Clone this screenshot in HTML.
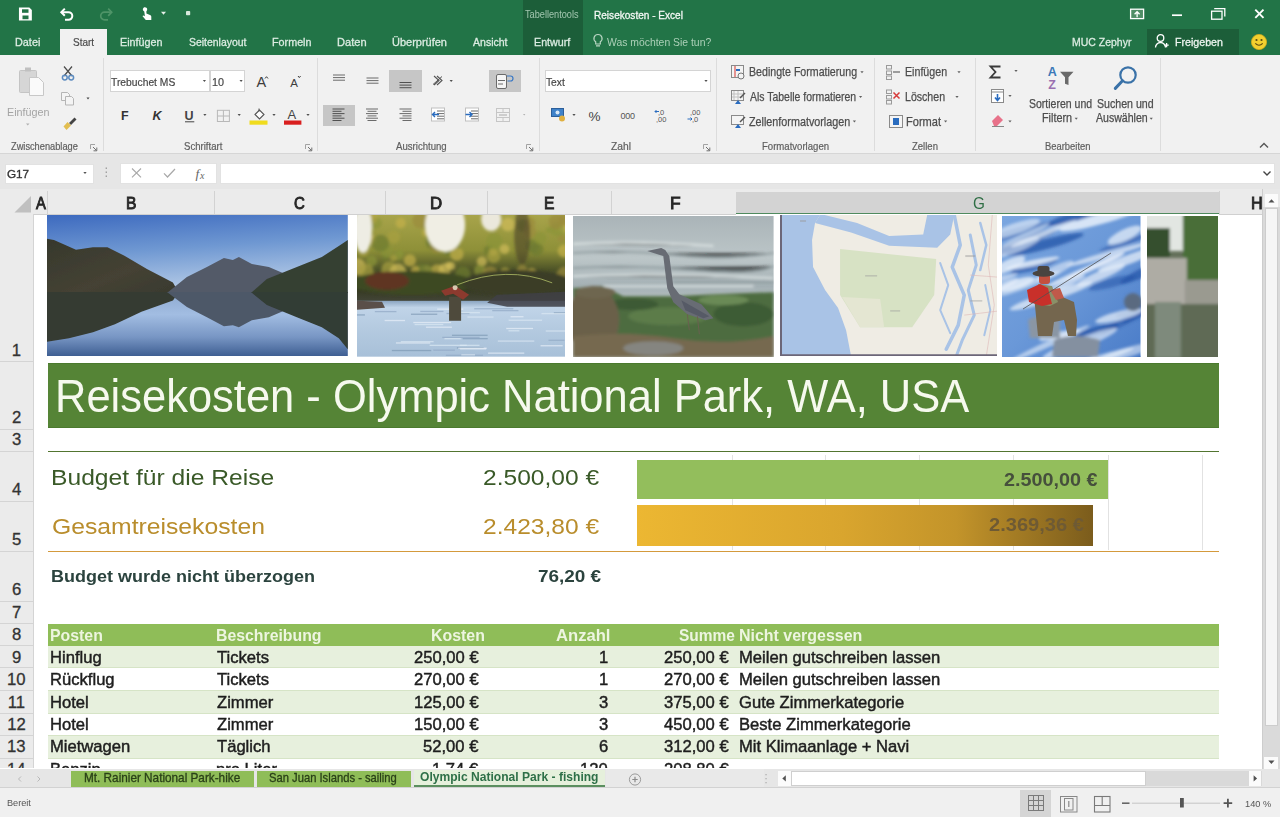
<!DOCTYPE html>
<html><head><meta charset="utf-8"><title>Excel</title>
<style>
*{margin:0;padding:0;box-sizing:border-box}
html,body{width:1280px;height:817px;overflow:hidden;background:#fff;font-family:"Liberation Sans",sans-serif}
.a{position:absolute}
.t{position:absolute;white-space:nowrap;line-height:1;transform-origin:0 0}
svg{position:absolute;overflow:visible}
svg.ph{overflow:hidden}
</style></head><body>
<div class="a" style="left:0;top:0;width:1280px;height:55px;background:#227447"></div>
<div class="a" style="left:523px;top:0;width:60px;height:55px;background:#1c5e39"></div>
<div class="a" style="left:1147px;top:29px;width:92px;height:26px;background:#1c5e39"></div>
<div class="a" style="left:60px;top:29px;width:47px;height:26px;background:#f1f1f1"></div>
<svg style="left:0;top:0" width="200" height="29" viewBox="0 0 200 29">
  <g fill="none" stroke="#fff" stroke-width="1.7">
   <path d="M19.8 8.3h9.2l2 2v9.4h-11.2z" fill="#fff"/>
   <path d="M61.5 12.2h7a3.8 3.8 0 0 1 0 7.6h-3.5" stroke-width="2"/><path d="M64.8 8.6l-3.5 3.6l3.5 3.6" stroke-width="2"/>
  </g>
  <g fill="none" stroke="#4f9468" stroke-width="1.7"><path d="M111.5 12.2h-7a3.8 3.8 0 0 0 0 7.6h3.5"/><path d="M108.2 8.6l3.5 3.6l-3.5 3.6"/></g>
  <g fill="#fff"><path d="M144.3 11.5c-1.6-0.6-2-2.7-0.7-3.8c1.3-1.1 3.4-0.3 3.6 1.4c0.1 0.8-0.2 1.6-0.8 2.1v2.4l3.6 1.3c0.8 0.3 1.3 1 1.3 1.9v3.2h-5.5l-3.4-3.9l1.2-0.7l1.3 0.9z"/></g>
  <path d="M161 11.8h5l-2.5 3z" fill="#e8f0ea"/>
  <rect x="22" y="9.3" width="6.5" height="3.5" fill="#227447"/><rect x="22.5" y="15.5" width="6" height="3.7" fill="#227447"/>
  <rect x="186" y="11" width="4.2" height="4.2" rx="0.8" fill="#d8e8dc"/>
 </svg>
<span class="t" style="left:525.42px;top:10.00px;font-size:10.15px;color:#a3c7b0;transform:scaleX(0.9069);">Tabellentools</span>

<span class="t" style="left:593.99px;top:10.00px;font-size:11.4px;color:#f4f8f5;transform:scaleX(0.8835);-webkit-text-stroke:0.3px #f4f8f5;">Reisekosten - Excel</span>

<svg style="left:0;top:0" width="1280" height="29" viewBox="0 0 1280 29">
  <g fill="none" stroke="#fff" stroke-width="1.3">
   <rect x="1130.6" y="9.2" width="13" height="9.4" fill="#4f8e66"/>
   <path d="M1137.1 17.2v-5M1134.6 14.2l2.5-2.5l2.5 2.5" />
   <path d="M1172 15.2h10" stroke-width="1.7"/>
   <path d="M1214.2 8.6h10.6v7.8"/><rect x="1211.6" y="11.2" width="10.4" height="8"/>
   <path d="M1255.3 9.6l8.2 8.2M1263.5 9.6l-8.2 8.2" stroke-width="1.9"/>
  </g>
 </svg>
<span class="t" style="left:15.38px;top:36.00px;font-size:11.6px;color:#dcece2;transform:scaleX(0.9354);-webkit-text-stroke:0.3px #dcece2;">Datei</span>

<span class="t" style="left:120.14px;top:36.00px;font-size:11.6px;color:#dcece2;transform:scaleX(0.9285);-webkit-text-stroke:0.3px #dcece2;">Einfügen</span>

<span class="t" style="left:188.53px;top:36.00px;font-size:11.6px;color:#dcece2;transform:scaleX(0.9001);-webkit-text-stroke:0.3px #dcece2;">Seitenlayout</span>

<span class="t" style="left:272.14px;top:36.00px;font-size:11.6px;color:#dcece2;transform:scaleX(0.9290);-webkit-text-stroke:0.3px #dcece2;">Formeln</span>

<span class="t" style="left:337.11px;top:36.00px;font-size:11.6px;color:#dcece2;transform:scaleX(0.9562);-webkit-text-stroke:0.3px #dcece2;">Daten</span>

<span class="t" style="left:391.67px;top:36.00px;font-size:11.6px;color:#dcece2;transform:scaleX(0.9474);-webkit-text-stroke:0.3px #dcece2;">Überprüfen</span>

<span class="t" style="left:472.50px;top:36.00px;font-size:11.6px;color:#dcece2;transform:scaleX(0.9080);-webkit-text-stroke:0.3px #dcece2;">Ansicht</span>

<span class="t" style="left:533.64px;top:36.00px;font-size:11.6px;color:#dcece2;transform:scaleX(0.9230);-webkit-text-stroke:0.3px #dcece2;">Entwurf</span>

<span class="t" style="left:1071.66px;top:36.00px;font-size:11.6px;color:#dcece2;transform:scaleX(0.9038);-webkit-text-stroke:0.3px #dcece2;">MUC Zephyr</span>

<span class="t" style="left:72.65px;top:36.00px;font-size:11.6px;color:#4a4a4a;transform:scaleX(0.8627);-webkit-text-stroke:0.2px #4a4a4a;">Start</span>

<span class="t" style="left:1174.65px;top:36.00px;font-size:11.6px;color:#eef5f0;transform:scaleX(0.9189);-webkit-text-stroke:0.3px #eef5f0;">Freigeben</span>

<span class="t" style="left:606.95px;top:36.00px;font-size:11.6px;color:#acd0b8;transform:scaleX(0.8968);">Was möchten Sie tun?</span>

<svg style="left:592px;top:33px" width="12" height="16" viewBox="0 0 12 16"><path d="M6 1.5a4 4 0 0 1 2.3 7.3v2.2h-4.6v-2.2A4 4 0 0 1 6 1.5zM4 12.8h4" fill="none" stroke="#b9d6c3" stroke-width="1.2"/></svg>
<svg style="left:1154px;top:33px" width="16" height="16" viewBox="0 0 16 16"><g fill="none" stroke="#fff" stroke-width="1.3"><circle cx="6.5" cy="5" r="3.3"/><path d="M1.5 14.5a5 5 0 0 1 10 0"/><path d="M10.5 12.2h4.2M12.6 10v4.3"/></g></svg>
<svg style="left:1250px;top:33px" width="18" height="18" viewBox="0 0 18 18"><circle cx="9" cy="9" r="7.6" fill="#f2d02f" stroke="#d6ae1a" stroke-width="0.8"/><circle cx="6.5" cy="7" r="1.1" fill="#5a4a10"/><circle cx="11.5" cy="7" r="1.1" fill="#5a4a10"/><path d="M5.3 10.3q3.7 3.8 7.4 0" fill="none" stroke="#5a4a10" stroke-width="1.1"/></svg>
<div class="a" style="left:0;top:55px;width:1280px;height:98px;background:#f1f1f1"></div>
<div class="a" style="left:103.3px;top:58px;width:1px;height:93px;background:#dcdcdc"></div>
<div class="a" style="left:317.0px;top:58px;width:1px;height:93px;background:#dcdcdc"></div>
<div class="a" style="left:538.5px;top:58px;width:1px;height:93px;background:#dcdcdc"></div>
<div class="a" style="left:715.5px;top:58px;width:1px;height:93px;background:#dcdcdc"></div>
<div class="a" style="left:873.9px;top:58px;width:1px;height:93px;background:#dcdcdc"></div>
<div class="a" style="left:974.5px;top:58px;width:1px;height:93px;background:#dcdcdc"></div>
<div class="a" style="left:1159.5px;top:58px;width:1px;height:93px;background:#dcdcdc"></div>
<span class="t" style="left:10.72px;top:141.00px;font-size:10.8px;color:#5e5e5e;transform:scaleX(0.8563);-webkit-text-stroke:0.2px #5e5e5e;">Zwischenablage</span>

<span class="t" style="left:184.17px;top:141.00px;font-size:10.8px;color:#5e5e5e;transform:scaleX(0.8877);-webkit-text-stroke:0.2px #5e5e5e;">Schriftart</span>

<span class="t" style="left:396.00px;top:141.00px;font-size:10.8px;color:#5e5e5e;transform:scaleX(0.8894);-webkit-text-stroke:0.2px #5e5e5e;">Ausrichtung</span>

<span class="t" style="left:610.69px;top:141.00px;font-size:10.8px;color:#5e5e5e;transform:scaleX(0.9527);-webkit-text-stroke:0.2px #5e5e5e;">Zahl</span>

<span class="t" style="left:761.74px;top:141.00px;font-size:10.8px;color:#5e5e5e;transform:scaleX(0.8864);-webkit-text-stroke:0.2px #5e5e5e;">Formatvorlagen</span>

<span class="t" style="left:912.21px;top:141.00px;font-size:10.8px;color:#5e5e5e;transform:scaleX(0.8818);-webkit-text-stroke:0.2px #5e5e5e;">Zellen</span>

<span class="t" style="left:1045.25px;top:141.00px;font-size:10.8px;color:#5e5e5e;transform:scaleX(0.8703);-webkit-text-stroke:0.2px #5e5e5e;">Bearbeiten</span>

<svg style="left:89.5px;top:144px" width="8" height="8" viewBox="0 0 8 8"><path d="M0.5 5V0.5h4.5" fill="none" stroke="#9a9a9a" stroke-width="0.9"/><path d="M3 3l3.5 3.5M6.8 3.5v3.3h-3.3" fill="none" stroke="#707070" stroke-width="1"/></svg>
<svg style="left:305px;top:144px" width="8" height="8" viewBox="0 0 8 8"><path d="M0.5 5V0.5h4.5" fill="none" stroke="#9a9a9a" stroke-width="0.9"/><path d="M3 3l3.5 3.5M6.8 3.5v3.3h-3.3" fill="none" stroke="#707070" stroke-width="1"/></svg>
<svg style="left:526px;top:144px" width="8" height="8" viewBox="0 0 8 8"><path d="M0.5 5V0.5h4.5" fill="none" stroke="#9a9a9a" stroke-width="0.9"/><path d="M3 3l3.5 3.5M6.8 3.5v3.3h-3.3" fill="none" stroke="#707070" stroke-width="1"/></svg>
<svg style="left:703px;top:144px" width="8" height="8" viewBox="0 0 8 8"><path d="M0.5 5V0.5h4.5" fill="none" stroke="#9a9a9a" stroke-width="0.9"/><path d="M3 3l3.5 3.5M6.8 3.5v3.3h-3.3" fill="none" stroke="#707070" stroke-width="1"/></svg>
<svg style="left:1259px;top:142px" width="10" height="7" viewBox="0 0 10 7"><path d="M1 5.5l4-4l4 4" fill="none" stroke="#555" stroke-width="1.4"/></svg>
<svg style="left:0;top:55px" width="104" height="98" viewBox="0 55 104 98">
 <g fill="#d6d6d6" stroke="#c4c4c4" stroke-width="1"><rect x="19.5" y="70.5" width="17" height="22" rx="1"/></g>
 <rect x="25" y="67.5" width="6" height="4" fill="#c0c0c0"/>
 <path d="M29.5 77.5h9l5 5v13h-14z" fill="#fafafa" stroke="#c8c8c8"/>
 <path d="M26 123.5h3.5l-1.75 2z" fill="#b0b0b0"/>
 <g fill="none" stroke="#4a4a4a" stroke-width="1.2"><path d="M64 66.5l8 9.5M72 66.5l-8 9.5"/></g>
 <g fill="none" stroke="#5d8cc0" stroke-width="1.5"><circle cx="64.8" cy="77.6" r="2.4"/><circle cx="71.2" cy="77.6" r="2.4"/></g>
 <g fill="#f4f4f4" stroke="#b5b5b5"><path d="M61.5 92.5h6l2 2v6h-8z"/><path d="M65.5 96.5h6l2 2v6.5h-8z"/></g>
 <path d="M86.5 97.5h3l-1.5 2z" fill="#444"/>
 <path d="M69 123l5.5-5.5l2 2l-5.5 5.5z" fill="#444"/>
 <path d="M63.5 126.5l4-4.5l3.5 3.5l-4.5 4.5z" fill="#e2be50"/>
</svg>
<span class="t" style="left:7.14px;top:106.00px;font-size:11.6px;color:#a4a4a4;transform:scaleX(0.9285);">Einfügen</span>

<div class="a" style="left:109.5px;top:70.3px;width:100px;height:21.5px;background:#fff;border:1px solid #d4d4d4"></div>
<div class="a" style="left:209.5px;top:70.3px;width:35.7px;height:21.5px;background:#fff;border:1px solid #d4d4d4"></div>
<span class="t" style="left:110.99px;top:77.00px;font-size:11.3px;color:#474747;transform:scaleX(0.9115);-webkit-text-stroke:0.2px #474747;">Trebuchet MS</span>

<span class="t" style="left:211.79px;top:77.00px;font-size:11.3px;color:#474747;transform:scaleX(0.9558);-webkit-text-stroke:0.2px #474747;">10</span>

<svg style="left:100px;top:60px" width="220" height="95" viewBox="100 60 220 95">
 <g fill="#505050"><path d="M202.8 80h3.2l-1.6 2z"/><path d="M239.5 80h3.2l-1.6 2z"/><path d="M203.3 114h3.2l-1.6 2z"/><path d="M237.6 114h3.2l-1.6 2z"/><path d="M272.4 114h3.2l-1.6 2z"/><path d="M306.4 114h3.2l-1.6 2z"/></g>
 <text x="256.5" y="87.2" font-family="Liberation Sans" font-size="14.5" fill="#3d3d3d">A</text><path d="M265 78.5l1.5-1.8l1.5 1.8" fill="none" stroke="#3d3d3d" stroke-width="1"/>
 <text x="290.3" y="87.2" font-family="Liberation Sans" font-size="11.5" fill="#3d3d3d">A</text><path d="M298 76l1.3 1.6l1.3-1.6" fill="none" stroke="#3d3d3d" stroke-width="1"/>
 <text x="121" y="119.8" font-family="Liberation Sans" font-weight="bold" font-size="12.5" fill="#333">F</text>
 <text x="152.5" y="119.8" font-family="Liberation Sans" font-weight="bold" font-style="italic" font-size="12.5" fill="#333">K</text>
 <text x="184.6" y="119.8" font-family="Liberation Sans" font-weight="bold" font-size="12.5" fill="#444">U</text><path d="M185 121.8h9.3" stroke="#444" stroke-width="1"/>
 <g fill="none" stroke="#b8b8b8" stroke-width="1"><rect x="217.4" y="110.3" width="12" height="11.2"/><path d="M223.4 110.3v11.2M217.4 116h12"/></g>
 <path d="M255 114.5l4.5-4.5l4.5 4.5l-4.5 4.5z" fill="#fff" stroke="#555" stroke-width="1.1"/><path d="M259 108.5v3" stroke="#555" stroke-width="1"/>
 <rect x="249.5" y="120.5" width="18" height="4.2" fill="#f0dc1e"/>
 <text x="287.6" y="119" font-family="Liberation Sans" font-size="13" fill="#444">A</text>
 <rect x="284" y="120.5" width="17.4" height="4.2" fill="#d91f1f"/>
</svg>
<div class="a" style="left:389px;top:70px;width:33px;height:22px;background:#c6c6c6"></div>
<div class="a" style="left:489px;top:70px;width:32px;height:22px;background:#c6c6c6"></div>
<div class="a" style="left:322.5px;top:104.5px;width:32.5px;height:21.5px;background:#c6c6c6"></div>
<svg style="left:320px;top:60px" width="400" height="90" viewBox="320 60 400 90"><rect x="333" y="74.5" width="12" height="1" fill="#6b6b6b"/><rect x="333" y="77.1" width="12" height="1" fill="#6b6b6b"/><rect x="333" y="79.7" width="12" height="1" fill="#6b6b6b"/><rect x="366.5" y="77.5" width="12" height="1" fill="#6b6b6b"/><rect x="366.5" y="80.1" width="12" height="1" fill="#6b6b6b"/><rect x="366.5" y="82.7" width="12" height="1" fill="#6b6b6b"/><rect x="399.5" y="82.0" width="12" height="1" fill="#505050"/><rect x="399.5" y="84.6" width="12" height="1" fill="#505050"/><rect x="399.5" y="87.2" width="12" height="1" fill="#505050"/><path d="M434 76l5 4.5l-5 4.5M437 76l5 4.5l-5 4.5" fill="none" stroke="#555" stroke-width="1.1"/><path d="M433 84.5l9-8" stroke="#555"/><path d="M449.6 80h3.2l-1.6 2z" fill="#505050"/><rect x="496.5" y="74.5" width="10" height="14" rx="1.5" fill="#f5f5f5" stroke="#6a6a6a"/><path d="M498 80.5h7M498 84h5" stroke="#6a6a6a"/><path d="M507 76h3.5a2.5 2.5 0 0 1 0 5h-3" fill="none" stroke="#3a78c4" stroke-width="1.2"/><rect x="332.5" y="108.5" width="12" height="1" fill="#505050"/><rect x="332.5" y="110.8" width="9" height="1" fill="#505050"/><rect x="332.5" y="113.1" width="12" height="1" fill="#505050"/><rect x="332.5" y="115.4" width="9" height="1" fill="#505050"/><rect x="332.5" y="117.7" width="12" height="1" fill="#505050"/><rect x="332.5" y="120.0" width="9" height="1" fill="#505050"/><rect x="366" y="108.5" width="12" height="1" fill="#6b6b6b"/><rect x="367.5" y="110.8" width="9" height="1" fill="#6b6b6b"/><rect x="366" y="113.1" width="12" height="1" fill="#6b6b6b"/><rect x="367.5" y="115.4" width="9" height="1" fill="#6b6b6b"/><rect x="366" y="117.7" width="12" height="1" fill="#6b6b6b"/><rect x="367.5" y="120.0" width="9" height="1" fill="#6b6b6b"/><rect x="399.5" y="108.5" width="12" height="1" fill="#6b6b6b"/><rect x="402.5" y="110.8" width="9" height="1" fill="#6b6b6b"/><rect x="399.5" y="113.1" width="12" height="1" fill="#6b6b6b"/><rect x="402.5" y="115.4" width="9" height="1" fill="#6b6b6b"/><rect x="399.5" y="117.7" width="12" height="1" fill="#6b6b6b"/><rect x="402.5" y="120.0" width="9" height="1" fill="#6b6b6b"/><rect x="431.5" y="108" width="13" height="13" fill="#fff" stroke="#c0c0c0"/><rect x="437" y="110.5" width="7" height="1" fill="#6b6b6b"/><rect x="437" y="113.1" width="7" height="1" fill="#6b6b6b"/><rect x="437" y="115.7" width="7" height="1" fill="#6b6b6b"/><rect x="437" y="118.3" width="7" height="1" fill="#6b6b6b"/><path d="M439 114.5h-6.5M435 112l-2.5 2.5l2.5 2.5" fill="none" stroke="#2a6cbf" stroke-width="1.4"/><rect x="465.5" y="108" width="13" height="13" fill="#fff" stroke="#c0c0c0"/><rect x="471" y="110.5" width="7" height="1" fill="#6b6b6b"/><rect x="471" y="113.1" width="7" height="1" fill="#6b6b6b"/><rect x="471" y="115.7" width="7" height="1" fill="#6b6b6b"/><rect x="471" y="118.3" width="7" height="1" fill="#6b6b6b"/><path d="M465.5 114.5h6.5M469.5 112l2.5 2.5l-2.5 2.5" fill="none" stroke="#2a6cbf" stroke-width="1.4"/><g fill="none" stroke="#c6c6c6"><rect x="496.5" y="108.5" width="13" height="13"/><path d="M496.5 112.5h13M496.5 117.5h13M503 108.5v4M503 117.5v4"/></g><path d="M499 115h8" stroke="#aaa"/><path d="M523 114h2.4l-1.2 1.5z" fill="#b0b0b0"/></svg>
<div class="a" style="left:544.5px;top:70.3px;width:166.5px;height:21.5px;background:#fff;border:1px solid #d4d4d4"></div>
<span class="t" style="left:545.80px;top:77.00px;font-size:11.3px;color:#474747;transform:scaleX(0.9070);-webkit-text-stroke:0.2px #474747;">Text</span>

<svg style="left:540px;top:60px" width="180" height="90" viewBox="540 60 180 90">
 <path d="M704.4 80h3.2l-1.6 2z" fill="#505050"/>
 <rect x="551.5" y="108.5" width="12" height="8" fill="#3f82c9" stroke="#2c5f9a"/><circle cx="557.5" cy="112.5" r="2" fill="#d9e8f6"/><circle cx="562" cy="118.5" r="3" fill="#e0b040"/>
 <path d="M572.4 114h3.2l-1.6 2z" fill="#505050"/>
 <text x="588.5" y="120.5" font-family="Liberation Sans" font-size="13.5" fill="#444">%</text>
 <text x="620.5" y="119" font-family="Liberation Sans" font-size="9" fill="#555" letter-spacing="-0.3">000</text>
 <text x="658" y="114.5" font-family="Liberation Sans" font-size="7.5" fill="#555">,0</text><text x="656" y="121.5" font-family="Liberation Sans" font-size="7.5" fill="#555">,00</text><path d="M655 111.5h4M656.5 110l-1.5 1.5l1.5 1.5" stroke="#2a6cbf" fill="none"/>
 <text x="690" y="114.5" font-family="Liberation Sans" font-size="7.5" fill="#555">,00</text><text x="692" y="121.5" font-family="Liberation Sans" font-size="7.5" fill="#555">,0</text><path d="M687.5 119h4.5M690.5 117.5l1.5 1.5l-1.5 1.5" stroke="#2a6cbf" fill="none"/>
</svg>
<span class="t" style="left:748.90px;top:67.00px;font-size:11.95px;color:#4d4d4d;transform:scaleX(0.8897);-webkit-text-stroke:0.25px #4d4d4d;">Bedingte Formatierung</span>

<span class="t" style="left:749.75px;top:92.00px;font-size:11.95px;color:#4d4d4d;transform:scaleX(0.8757);-webkit-text-stroke:0.25px #4d4d4d;">Als Tabelle formatieren</span>

<span class="t" style="left:749.43px;top:117.00px;font-size:11.95px;color:#4d4d4d;transform:scaleX(0.9028);-webkit-text-stroke:0.25px #4d4d4d;">Zellenformatvorlagen</span>

<svg style="left:720px;top:60px" width="260" height="90" viewBox="720 60 260 90">
 <g fill="#606060"><path d="M860.4 71.2h3.2l-1.6 2z"/><path d="M859 96h3.2l-1.6 2z"/><path d="M852.8 120.6h3.2l-1.6 2z"/></g>
 <rect x="731.5" y="65.5" width="12" height="12" fill="#f4f4f4" stroke="#8a8a8a"/><path d="M735 66v11" stroke="#d9534f" stroke-width="1.2"/><path d="M736 70h4" stroke="#2a6cbf" stroke-width="2"/><circle cx="741" cy="76" r="3" fill="#f4f4f4" stroke="#777"/>
 <rect x="731.5" y="90.5" width="12" height="10" fill="#f4f4f4" stroke="#8a8a8a"/><path d="M734 91v9M738 91v9M732 94h11M732 97h11" stroke="#c0c0c0"/><path d="M735 104l3-4l3 4z" fill="#2a6cbf"/><path d="M740 98l5-5" stroke="#555" stroke-width="1.5"/>
 <rect x="731.5" y="115.5" width="12" height="9" fill="#f4f4f4" stroke="#8a8a8a"/><path d="M735 128l3-4l3 4z" fill="#2a6cbf"/><path d="M740 122l5-5" stroke="#555" stroke-width="1.5"/>
</svg>
<span class="t" style="left:904.65px;top:67.00px;font-size:11.95px;color:#4d4d4d;transform:scaleX(0.8926);-webkit-text-stroke:0.25px #4d4d4d;">Einfügen</span>

<span class="t" style="left:904.65px;top:92.00px;font-size:11.95px;color:#4d4d4d;transform:scaleX(0.8871);-webkit-text-stroke:0.25px #4d4d4d;">Löschen</span>

<span class="t" style="left:906.12px;top:117.00px;font-size:11.95px;color:#4d4d4d;transform:scaleX(0.9245);-webkit-text-stroke:0.25px #4d4d4d;">Format</span>

<svg style="left:880px;top:60px" width="100" height="90" viewBox="880 60 100 90">
 <g fill="#606060"><path d="M957.4 71.2h3.2l-1.6 2z"/><path d="M955.4 96h3.2l-1.6 2z"/><path d="M944 120.6h3.2l-1.6 2z"/></g>
 <g fill="none" stroke="#9a9a9a"><rect x="886.5" y="65.5" width="5" height="3.5"/><rect x="886.5" y="71" width="5" height="3.5"/><rect x="886.5" y="76" width="5" height="3.5"/></g><path d="M893 72h7" stroke="#666" stroke-width="1.2"/>
 <g fill="none" stroke="#9a9a9a"><rect x="886.5" y="90" width="5" height="3.5"/><rect x="886.5" y="95.5" width="5" height="3.5"/><rect x="886.5" y="100.5" width="5" height="3.5"/></g><path d="M893.5 92.5l6 6M899.5 92.5l-6 6" stroke="#d63a3a" stroke-width="1.5"/>
 <rect x="889.5" y="115.5" width="13" height="12" fill="#f4f4f4" stroke="#8a8a8a"/><rect x="893" y="118" width="6" height="7" fill="#2a6cbf"/>
</svg>
<span class="t" style="left:1028.53px;top:99.00px;font-size:11.95px;color:#4d4d4d;transform:scaleX(0.8809);-webkit-text-stroke:0.25px #4d4d4d;">Sortieren und</span>

<span class="t" style="left:1041.63px;top:113.00px;font-size:11.95px;color:#4d4d4d;transform:scaleX(0.9076);-webkit-text-stroke:0.25px #4d4d4d;">Filtern</span>

<span class="t" style="left:1096.52px;top:99.00px;font-size:11.95px;color:#4d4d4d;transform:scaleX(0.8896);-webkit-text-stroke:0.25px #4d4d4d;">Suchen und</span>

<span class="t" style="left:1096.00px;top:113.00px;font-size:11.95px;color:#4d4d4d;transform:scaleX(0.8853);-webkit-text-stroke:0.25px #4d4d4d;">Auswählen</span>

<svg style="left:976px;top:60px" width="184" height="90" viewBox="976 60 184 90">
 <g fill="#606060"><path d="M1014.4 70h3.2l-1.6 2z"/><path d="M1008.4 95h3.2l-1.6 2z"/><path d="M1008.4 120.5h3.2l-1.6 2z"/><path d="M1074.6 117.8h3.2l-1.6 2z"/><path d="M1149.6 117.8h3.2l-1.6 2z"/></g>
 <path d="M1000.5 66.5h-10l5 5.5l-5 5.5h10" fill="none" stroke="#3a3a3a" stroke-width="1.8"/>
 <rect x="991.5" y="89.5" width="12" height="13" fill="#fff" stroke="#8a8a8a"/><path d="M991.5 92h12" stroke="#8a8a8a"/><path d="M997.5 94v6M995 97.5l2.5 3l2.5-3" fill="none" stroke="#2a6cbf" stroke-width="1.6"/>
 <path d="M992 121l6-6l5 5l-6 6h-3z" fill="#e8728a"/><path d="M992 126.5h12" stroke="#888"/>
 <text x="1047.8" y="75.8" font-family="Liberation Sans" font-weight="bold" font-size="12.5" fill="#3a78b8">A</text>
 <text x="1048.3" y="88.5" font-family="Liberation Sans" font-weight="bold" font-size="12.5" fill="#9a70b0">Z</text>
 <path d="M1060 71.8h13.5l-5 5.5v7.6l-3.5-1.2v-6.4z" fill="#6a6a6a"/>
 <circle cx="1128" cy="75" r="7.7" fill="none" stroke="#3a72a8" stroke-width="2.2"/><path d="M1122.5 80.8l-7.2 7.6" stroke="#3a72a8" stroke-width="3" stroke-linecap="round"/>
</svg>
<div class="a" style="left:0;top:152.5px;width:1280px;height:37px;background:#e6e6e6"></div>
<div class="a" style="left:0;top:152.5px;width:1280px;height:1px;background:#d6d6d6"></div>
<div class="a" style="left:4.5px;top:163.5px;width:89px;height:20.5px;background:#fff;border:1px solid #e2e2e2"></div>
<div class="a" style="left:120.3px;top:163.2px;width:96.6px;height:20.6px;background:#fff;border:1px solid #e2e2e2"></div>
<div class="a" style="left:220px;top:163.2px;width:1055px;height:20.6px;background:#fff;border:1px solid #e2e2e2"></div>
<span class="t" style="left:7.41px;top:168.00px;font-size:11.6px;color:#333;transform:scaleX(1.0096);-webkit-text-stroke:0.35px #333;">G17</span>

<svg style="left:0;top:150px" width="1280" height="40" viewBox="0 150 1280 40">
 <path d="M83.3 172h3.4l-1.7 2z" fill="#555"/>
 <g fill="#9a9a9a"><rect x="105.6" y="167.5" width="1.4" height="1.4"/><rect x="105.6" y="171.5" width="1.4" height="1.4"/><rect x="105.6" y="175.5" width="1.4" height="1.4"/></g>
 <path d="M132 168.5l9 8.8M141 168.5l-9 8.8" stroke="#a8a8a8" stroke-width="1.1"/>
 <path d="M164 173.3l3.5 3.7l7.5-8" fill="none" stroke="#a8a8a8" stroke-width="1.2"/>
 <text x="195.5" y="178" font-family="Liberation Serif" font-style="italic" font-size="13.5" fill="#666">f</text><text x="200" y="179" font-family="Liberation Serif" font-style="italic" font-size="10" fill="#666">x</text>
 <path d="M1263.5 171.5l3.5 3.5l3.5-3.5" fill="none" stroke="#444" stroke-width="1.4"/>
</svg>
<div class="a" style="left:0;top:0;width:1262px;height:768px;overflow:hidden">
<div class="a" style="left:0;top:189.4px;width:1262px;height:24.6px;background:#ebebeb"></div>
<div class="a" style="left:736px;top:192px;width:483px;height:22px;background:#d3d3d3"></div>
<div class="a" style="left:736px;top:212.6px;width:483px;height:1.5px;background:#4f8a5e"></div>
<div class="a" style="left:0;top:213.5px;width:736px;height:1px;background:#d0d0d0"></div>
<div class="a" style="left:1219px;top:213.5px;width:43px;height:1px;background:#d0d0d0"></div>
<div class="a" style="left:47.0px;top:191px;width:1px;height:23px;background:#d2d2d2"></div>
<div class="a" style="left:213.9px;top:191px;width:1px;height:23px;background:#d2d2d2"></div>
<div class="a" style="left:384.5px;top:191px;width:1px;height:23px;background:#d2d2d2"></div>
<div class="a" style="left:486.5px;top:191px;width:1px;height:23px;background:#d2d2d2"></div>
<div class="a" style="left:610.5px;top:191px;width:1px;height:23px;background:#d2d2d2"></div>
<div class="a" style="left:1218.5px;top:191px;width:1px;height:23px;background:#d2d2d2"></div>
<svg style="left:0;top:189px" width="34" height="25" viewBox="0 189 34 25"><path d="M14.5 212.5L31 196v16.5z" fill="#c0c0c0"/></svg>
<div class="a" style="left:0;top:214px;width:33.4px;height:554px;background:#ebebeb"></div>
<div class="a" style="left:33px;top:214px;width:1px;height:554px;background:#d4d4d4"></div>
<span class="t" style="left:35.80px;top:195.00px;font-size:16.5px;color:#262626;transform:scaleX(0.8942);-webkit-text-stroke:0.9px #262626;">A</span>

<span class="t" style="left:126.00px;top:195.00px;font-size:16.5px;color:#262626;transform:scaleX(0.9471);-webkit-text-stroke:0.9px #262626;">B</span>

<span class="t" style="left:293.75px;top:195.00px;font-size:16.5px;color:#262626;transform:scaleX(0.9078);-webkit-text-stroke:0.9px #262626;">C</span>

<span class="t" style="left:429.66px;top:195.00px;font-size:16.5px;color:#262626;transform:scaleX(1.0198);-webkit-text-stroke:0.9px #262626;">D</span>

<span class="t" style="left:544.25px;top:195.00px;font-size:16.5px;color:#262626;transform:scaleX(0.9464);-webkit-text-stroke:0.9px #262626;">E</span>

<span class="t" style="left:669.61px;top:195.00px;font-size:16.5px;color:#262626;transform:scaleX(1.0526);-webkit-text-stroke:0.9px #262626;">F</span>

<span class="t" style="left:1250.71px;top:195.00px;font-size:16.5px;color:#262626;transform:scaleX(0.9752);-webkit-text-stroke:0.9px #262626;">H</span>

<span class="t" style="left:973.24px;top:195.00px;font-size:16.5px;color:#2f6e45;transform:scaleX(0.9264);">G</span>

<div class="a" style="left:0;top:361.3px;width:33px;height:1px;background:#d4d4d4"></div>
<div class="a" style="left:0;top:428.5px;width:33px;height:1px;background:#d4d4d4"></div>
<div class="a" style="left:0;top:451.3px;width:33px;height:1px;background:#d4d4d4"></div>
<div class="a" style="left:0;top:500.5px;width:33px;height:1px;background:#d4d4d4"></div>
<div class="a" style="left:0;top:550.5px;width:33px;height:1px;background:#d4d4d4"></div>
<div class="a" style="left:0;top:600.5px;width:33px;height:1px;background:#d4d4d4"></div>
<div class="a" style="left:0;top:623.3px;width:33px;height:1px;background:#d4d4d4"></div>
<div class="a" style="left:0;top:645.1px;width:33px;height:1px;background:#d4d4d4"></div>
<div class="a" style="left:0;top:667.3px;width:33px;height:1px;background:#d4d4d4"></div>
<div class="a" style="left:0;top:690.0px;width:33px;height:1px;background:#d4d4d4"></div>
<div class="a" style="left:0;top:712.5px;width:33px;height:1px;background:#d4d4d4"></div>
<div class="a" style="left:0;top:735.3px;width:33px;height:1px;background:#d4d4d4"></div>
<div class="a" style="left:0;top:757.8px;width:33px;height:1px;background:#d4d4d4"></div>
<span class="t" style="left:11.72px;top:343.00px;font-size:16.7px;color:#333;-webkit-text-stroke:0.3px #333;">1</span>

<span class="t" style="left:11.97px;top:410.00px;font-size:16.7px;color:#333;-webkit-text-stroke:0.3px #333;">2</span>

<span class="t" style="left:11.97px;top:432.00px;font-size:16.7px;color:#333;-webkit-text-stroke:0.3px #333;">3</span>

<span class="t" style="left:12.05px;top:482.00px;font-size:16.7px;color:#333;-webkit-text-stroke:0.3px #333;">4</span>

<span class="t" style="left:11.97px;top:532.00px;font-size:16.7px;color:#333;-webkit-text-stroke:0.3px #333;">5</span>

<span class="t" style="left:11.89px;top:582.00px;font-size:16.7px;color:#333;-webkit-text-stroke:0.3px #333;">6</span>

<span class="t" style="left:11.97px;top:605.00px;font-size:16.7px;color:#333;-webkit-text-stroke:0.3px #333;">7</span>

<span class="t" style="left:11.93px;top:627.00px;font-size:16.7px;color:#333;-webkit-text-stroke:0.3px #333;">8</span>

<span class="t" style="left:11.97px;top:650.00px;font-size:16.7px;color:#333;-webkit-text-stroke:0.3px #333;">9</span>

<span class="t" style="left:7.00px;top:672.00px;font-size:16.7px;color:#333;-webkit-text-stroke:0.3px #333;">10</span>

<span class="t" style="left:7.71px;top:695.00px;font-size:16.7px;color:#333;-webkit-text-stroke:0.3px #333;">11</span>

<span class="t" style="left:7.13px;top:717.00px;font-size:16.7px;color:#333;-webkit-text-stroke:0.3px #333;">12</span>

<span class="t" style="left:7.04px;top:739.00px;font-size:16.7px;color:#333;-webkit-text-stroke:0.3px #333;">13</span>

<span class="t" style="left:6.96px;top:762.00px;font-size:16.7px;color:#333;-webkit-text-stroke:0.3px #333;">14</span>

<div class="a" style="left:47.7px;top:362.8px;width:1171.3px;height:65.4px;background:#558436;border-top:1px solid #4b7a2e;border-bottom:1px solid #4b7a2e"></div>
<span class="t" style="left:54.62px;top:374.00px;font-size:45.45px;color:#f6f9ee;transform:scaleX(0.9570);">Reisekosten - Olympic National Park, WA, USA</span>

<div class="a" style="left:47.6px;top:451px;width:1171.4px;height:1.4px;background:#527530"></div>
<div class="a" style="left:47.6px;top:550.5px;width:1171.4px;height:1.5px;background:#d49a3c"></div>
<div class="a" style="left:731.5px;top:455px;width:1px;height:95px;background:#e2e2e2"></div>
<div class="a" style="left:825.0px;top:455px;width:1px;height:95px;background:#e2e2e2"></div>
<div class="a" style="left:919.0px;top:455px;width:1px;height:95px;background:#e2e2e2"></div>
<div class="a" style="left:1013.0px;top:455px;width:1px;height:95px;background:#e2e2e2"></div>
<div class="a" style="left:1107.5px;top:455px;width:1px;height:95px;background:#e2e2e2"></div>
<div class="a" style="left:1201.5px;top:455px;width:1px;height:95px;background:#e2e2e2"></div>
<div class="a" style="left:637.4px;top:460px;width:470.6px;height:39.4px;background:#93be5c"></div>
<div class="a" style="left:637.4px;top:505.4px;width:455.6px;height:40.3px;background:linear-gradient(90deg,#ecb732 0%,#d9a52e 45%,#c3942a 70%,#7b5c1c 100%)"></div>
<span class="t" style="left:50.93px;top:467.00px;font-size:22.5px;color:#3a5a28;transform:scaleX(1.0948);">Budget für die Reise</span>

<span class="t" style="left:51.66px;top:516.00px;font-size:22.5px;color:#b98d2c;transform:scaleX(1.0986);">Gesamtreisekosten</span>

<span class="t" style="left:483.27px;top:467.00px;font-size:22.5px;color:#3a5a28;transform:scaleX(1.0920);">2.500,00 €</span>

<span class="t" style="left:483.27px;top:516.00px;font-size:22.5px;color:#b98d2c;transform:scaleX(1.0920);">2.423,80 €</span>

<span class="t" style="left:51.13px;top:568.00px;font-size:16.5px;color:#2b433e;font-weight:bold;transform:scaleX(1.0911);">Budget wurde nicht überzogen</span>

<span class="t" style="left:538.24px;top:568.00px;font-size:16.5px;color:#2b433e;font-weight:bold;transform:scaleX(1.1470);">76,20 €</span>

<span class="t" style="left:1004.31px;top:472.00px;font-size:17.45px;color:#46503c;font-weight:bold;transform:scaleX(1.1352);">2.500,00 €</span>

<span class="t" style="left:989.30px;top:517.00px;font-size:17.45px;color:#6e5a34;font-weight:bold;transform:scaleX(1.1505);">2.369,36 €</span>

<div class="a" style="left:47.7px;top:623.8px;width:1171.3px;height:21.8px;background:#8fbd58"></div>
<div class="a" style="left:47.7px;top:645.6px;width:1171.3px;height:22.199999999999932px;background:#e7f0dd"></div>
<div class="a" style="left:47.7px;top:667.3px;width:1171.3px;height:1px;background:#d6e4c6"></div>
<div class="a" style="left:47.7px;top:690.0px;width:1171.3px;height:1px;background:#d6e4c6"></div>
<div class="a" style="left:47.7px;top:690.5px;width:1171.3px;height:22.5px;background:#e7f0dd"></div>
<div class="a" style="left:47.7px;top:712.5px;width:1171.3px;height:1px;background:#d6e4c6"></div>
<div class="a" style="left:47.7px;top:735.3px;width:1171.3px;height:1px;background:#d6e4c6"></div>
<div class="a" style="left:47.7px;top:735.8px;width:1171.3px;height:22.5px;background:#e7f0dd"></div>
<div class="a" style="left:47.7px;top:757.8px;width:1171.3px;height:1px;background:#d6e4c6"></div>
<div class="a" style="left:47.7px;top:780.5px;width:1171.3px;height:1px;background:#d6e4c6"></div>
<span class="t" style="left:49.97px;top:627.00px;font-size:16.25px;color:#edf5e0;font-weight:bold;transform:scaleX(0.9746);">Posten</span>

<span class="t" style="left:216.47px;top:627.00px;font-size:16.25px;color:#edf5e0;font-weight:bold;transform:scaleX(0.9734);">Beschreibung</span>

<span class="t" style="left:430.96px;top:627.00px;font-size:16.25px;color:#edf5e0;font-weight:bold;transform:scaleX(0.9789);">Kosten</span>

<span class="t" style="left:555.58px;top:627.00px;font-size:16.25px;color:#edf5e0;font-weight:bold;transform:scaleX(1.0228);">Anzahl</span>

<span class="t" style="left:678.53px;top:627.00px;font-size:16.25px;color:#edf5e0;font-weight:bold;transform:scaleX(0.9536);">Summe</span>

<span class="t" style="left:738.96px;top:627.00px;font-size:16.25px;color:#edf5e0;font-weight:bold;transform:scaleX(0.9826);">Nicht vergessen</span>

<span class="t" style="left:49.67px;top:650.00px;font-size:16.7px;color:#1e1e1e;transform:scaleX(0.9950);-webkit-text-stroke:0.45px #1e1e1e;">Hinflug</span>

<span class="t" style="left:217.17px;top:650.00px;font-size:16.7px;color:#1e1e1e;transform:scaleX(0.9950);-webkit-text-stroke:0.45px #1e1e1e;">Tickets</span>

<span class="t" style="left:413.65px;top:650.00px;font-size:16.7px;color:#1e1e1e;transform:scaleX(0.9950);-webkit-text-stroke:0.45px #1e1e1e;">250,00 €</span>

<span class="t" style="left:599.03px;top:650.00px;font-size:16.7px;color:#1e1e1e;transform:scaleX(0.9950);-webkit-text-stroke:0.45px #1e1e1e;">1</span>

<span class="t" style="left:663.65px;top:650.00px;font-size:16.7px;color:#1e1e1e;transform:scaleX(0.9950);-webkit-text-stroke:0.45px #1e1e1e;">250,00 €</span>

<span class="t" style="left:738.67px;top:650.00px;font-size:16.7px;color:#1e1e1e;transform:scaleX(0.9950);-webkit-text-stroke:0.45px #1e1e1e;">Meilen gutschreiben lassen</span>

<span class="t" style="left:49.67px;top:672.00px;font-size:16.7px;color:#1e1e1e;transform:scaleX(0.9950);-webkit-text-stroke:0.45px #1e1e1e;">Rückflug</span>

<span class="t" style="left:217.17px;top:672.00px;font-size:16.7px;color:#1e1e1e;transform:scaleX(0.9950);-webkit-text-stroke:0.45px #1e1e1e;">Tickets</span>

<span class="t" style="left:413.65px;top:672.00px;font-size:16.7px;color:#1e1e1e;transform:scaleX(0.9950);-webkit-text-stroke:0.45px #1e1e1e;">270,00 €</span>

<span class="t" style="left:599.03px;top:672.00px;font-size:16.7px;color:#1e1e1e;transform:scaleX(0.9950);-webkit-text-stroke:0.45px #1e1e1e;">1</span>

<span class="t" style="left:663.65px;top:672.00px;font-size:16.7px;color:#1e1e1e;transform:scaleX(0.9950);-webkit-text-stroke:0.45px #1e1e1e;">270,00 €</span>

<span class="t" style="left:738.67px;top:672.00px;font-size:16.7px;color:#1e1e1e;transform:scaleX(0.9950);-webkit-text-stroke:0.45px #1e1e1e;">Meilen gutschreiben lassen</span>

<span class="t" style="left:49.67px;top:695.00px;font-size:16.7px;color:#1e1e1e;transform:scaleX(0.9950);-webkit-text-stroke:0.45px #1e1e1e;">Hotel</span>

<span class="t" style="left:217.00px;top:695.00px;font-size:16.7px;color:#1e1e1e;transform:scaleX(0.9950);-webkit-text-stroke:0.45px #1e1e1e;">Zimmer</span>

<span class="t" style="left:413.65px;top:695.00px;font-size:16.7px;color:#1e1e1e;transform:scaleX(0.9950);-webkit-text-stroke:0.45px #1e1e1e;">125,00 €</span>

<span class="t" style="left:598.95px;top:695.00px;font-size:16.7px;color:#1e1e1e;transform:scaleX(0.9950);-webkit-text-stroke:0.45px #1e1e1e;">3</span>

<span class="t" style="left:663.65px;top:695.00px;font-size:16.7px;color:#1e1e1e;transform:scaleX(0.9950);-webkit-text-stroke:0.45px #1e1e1e;">375,00 €</span>

<span class="t" style="left:739.17px;top:695.00px;font-size:16.7px;color:#1e1e1e;transform:scaleX(0.9950);-webkit-text-stroke:0.45px #1e1e1e;">Gute Zimmerkategorie</span>

<span class="t" style="left:49.67px;top:717.00px;font-size:16.7px;color:#1e1e1e;transform:scaleX(0.9950);-webkit-text-stroke:0.45px #1e1e1e;">Hotel</span>

<span class="t" style="left:217.00px;top:717.00px;font-size:16.7px;color:#1e1e1e;transform:scaleX(0.9950);-webkit-text-stroke:0.45px #1e1e1e;">Zimmer</span>

<span class="t" style="left:413.65px;top:717.00px;font-size:16.7px;color:#1e1e1e;transform:scaleX(0.9950);-webkit-text-stroke:0.45px #1e1e1e;">150,00 €</span>

<span class="t" style="left:598.95px;top:717.00px;font-size:16.7px;color:#1e1e1e;transform:scaleX(0.9950);-webkit-text-stroke:0.45px #1e1e1e;">3</span>

<span class="t" style="left:663.65px;top:717.00px;font-size:16.7px;color:#1e1e1e;transform:scaleX(0.9950);-webkit-text-stroke:0.45px #1e1e1e;">450,00 €</span>

<span class="t" style="left:738.67px;top:717.00px;font-size:16.7px;color:#1e1e1e;transform:scaleX(0.9950);-webkit-text-stroke:0.45px #1e1e1e;">Beste Zimmerkategorie</span>

<span class="t" style="left:49.67px;top:739.00px;font-size:16.7px;color:#1e1e1e;transform:scaleX(0.9950);-webkit-text-stroke:0.45px #1e1e1e;">Mietwagen</span>

<span class="t" style="left:217.17px;top:739.00px;font-size:16.7px;color:#1e1e1e;transform:scaleX(0.9950);-webkit-text-stroke:0.45px #1e1e1e;">Täglich</span>

<span class="t" style="left:422.87px;top:739.00px;font-size:16.7px;color:#1e1e1e;transform:scaleX(0.9950);-webkit-text-stroke:0.45px #1e1e1e;">52,00 €</span>

<span class="t" style="left:598.95px;top:739.00px;font-size:16.7px;color:#1e1e1e;transform:scaleX(0.9950);-webkit-text-stroke:0.45px #1e1e1e;">6</span>

<span class="t" style="left:663.65px;top:739.00px;font-size:16.7px;color:#1e1e1e;transform:scaleX(0.9950);-webkit-text-stroke:0.45px #1e1e1e;">312,00 €</span>

<span class="t" style="left:738.67px;top:739.00px;font-size:16.7px;color:#1e1e1e;transform:scaleX(0.9950);-webkit-text-stroke:0.45px #1e1e1e;">Mit Klimaanlage + Navi</span>

<span class="t" style="left:49.67px;top:762.00px;font-size:16.7px;color:#1e1e1e;transform:scaleX(0.9950);-webkit-text-stroke:0.45px #1e1e1e;">Benzin</span>

<span class="t" style="left:216.42px;top:762.00px;font-size:16.7px;color:#1e1e1e;transform:scaleX(0.9950);-webkit-text-stroke:0.45px #1e1e1e;">pro Liter</span>

<span class="t" style="left:432.08px;top:762.00px;font-size:16.7px;color:#1e1e1e;transform:scaleX(0.9950);-webkit-text-stroke:0.45px #1e1e1e;">1,74 €</span>

<span class="t" style="left:580.43px;top:762.00px;font-size:16.7px;color:#1e1e1e;transform:scaleX(0.9950);-webkit-text-stroke:0.45px #1e1e1e;">120</span>

<span class="t" style="left:663.65px;top:762.00px;font-size:16.7px;color:#1e1e1e;transform:scaleX(0.9950);-webkit-text-stroke:0.45px #1e1e1e;">208,80 €</span>

</div>
<svg class="ph" style="left:47.4px;top:215.3px" width="300.8" height="141.2" viewBox="0 0 301 141" preserveAspectRatio="none"><defs>
<linearGradient id="sky1" x1="0" y1="0" x2="0.25" y2="1"><stop offset="0" stop-color="#3d6abf"/><stop offset="0.5" stop-color="#6f98d2"/><stop offset="1" stop-color="#b4cae6"/></linearGradient>
<linearGradient id="wat1" x1="0" y1="0" x2="0" y2="1"><stop offset="0" stop-color="#8eaad0"/><stop offset="0.35" stop-color="#a2bde2"/><stop offset="0.7" stop-color="#7896c4"/><stop offset="1" stop-color="#3e5e92"/></linearGradient>
<linearGradient id="mL" x1="0" y1="0" x2="1" y2="1"><stop offset="0" stop-color="#36382c"/><stop offset="0.6" stop-color="#454234"/><stop offset="1" stop-color="#38392e"/></linearGradient>
<filter id="bl1"><feGaussianBlur stdDeviation="0.7"/></filter>
</defs>
<rect width="301" height="78" fill="url(#sky1)"/>
<rect y="77" width="301" height="64" fill="url(#wat1)"/>
<g filter="url(#bl1)">
<path d="M0 23.7L7 25L29 34.6L46 32.2L60.5 32.2L77.5 40.6L100 54L126 67.4L132 78L0 78z" fill="url(#mL)"/>
<path d="M120 78L140 62L160 52L177 43L186 45L192 42L205 49L222 52L236 58L225 64L206 78z" fill="#535a68"/>
<path d="M204 78L220 64L250 52L275 42L292 31L301 25L301 78z" fill="#363f33"/>
<path d="M0 77L132 77L126 85.5L94.5 96.5L68 109L46 117L22 123L0 126.6z" fill="#353a30"/>
<path d="M120 77L206 77L225 90L236 96L222 102L205 105L192 112L186 110L177 111L160 102L140 92z" fill="#4e5868"/>
<path d="M204 77L301 77L301 134L292 123L275 112L250 102L220 90z" fill="#323c34"/>

</g></svg>
<svg class="ph" style="left:356.5px;top:215.3px" width="208.2" height="141.7" viewBox="0 0 208 142" preserveAspectRatio="none"><defs>
<linearGradient id="tr2" x1="0" y1="0" x2="0" y2="1"><stop offset="0" stop-color="#a8a44a"/><stop offset="0.4" stop-color="#8e9038"/><stop offset="0.62" stop-color="#4e5428"/><stop offset="0.85" stop-color="#363a22"/><stop offset="1" stop-color="#44463a"/></linearGradient>
<linearGradient id="wa2" x1="0" y1="0" x2="0" y2="1"><stop offset="0" stop-color="#8aa4c0"/><stop offset="0.12" stop-color="#c0d4e8"/><stop offset="0.5" stop-color="#b4cae0"/><stop offset="1" stop-color="#a8c0d8"/></linearGradient>
<filter id="bl2"><feGaussianBlur stdDeviation="1.8"/></filter>
<filter id="bl2b"><feGaussianBlur stdDeviation="0.7"/></filter>
</defs>
<rect width="208" height="88" fill="url(#tr2)"/>
<g filter="url(#bl2)">
<circle cx="94.1" cy="33.6" r="8.5" fill="#6c7a30" opacity="0.7"/><circle cx="94.0" cy="51.3" r="4.1" fill="#d0bc58" opacity="0.7"/><circle cx="99.0" cy="36.8" r="4.1" fill="#6c7a30" opacity="0.7"/><circle cx="63.1" cy="5.4" r="7.9" fill="#9a8a3a" opacity="0.7"/><circle cx="132.0" cy="35.7" r="5.4" fill="#6c7a30" opacity="0.7"/><circle cx="136.0" cy="36.9" r="3.9" fill="#c4b04a" opacity="0.7"/><circle cx="173.0" cy="3.8" r="3.2" fill="#a8a040" opacity="0.7"/><circle cx="124.7" cy="46.7" r="5.0" fill="#d0bc58" opacity="0.7"/><circle cx="175.2" cy="31.1" r="6.8" fill="#6c7a30" opacity="0.7"/><circle cx="1.0" cy="5.1" r="6.9" fill="#6c7a30" opacity="0.7"/><circle cx="207.5" cy="59.7" r="8.0" fill="#9a8a3a" opacity="0.7"/><circle cx="52.8" cy="45.5" r="6.1" fill="#c4b04a" opacity="0.7"/><circle cx="14.6" cy="46.0" r="5.4" fill="#8a9438" opacity="0.7"/><circle cx="80.4" cy="57.5" r="8.1" fill="#c4b04a" opacity="0.7"/><circle cx="44.4" cy="55.6" r="3.3" fill="#6c7a30" opacity="0.7"/><circle cx="203.9" cy="23.8" r="3.4" fill="#9a8a3a" opacity="0.7"/><circle cx="41.3" cy="40.5" r="5.0" fill="#8a9438" opacity="0.7"/><circle cx="69.2" cy="57.8" r="7.5" fill="#c4b04a" opacity="0.7"/><circle cx="28.0" cy="42.4" r="3.1" fill="#6c7a30" opacity="0.7"/><circle cx="165.8" cy="10.7" r="6.4" fill="#6c7a30" opacity="0.7"/><circle cx="105.8" cy="59.1" r="7.6" fill="#6c7a30" opacity="0.7"/><circle cx="133.9" cy="7.0" r="5.5" fill="#a8a040" opacity="0.7"/><circle cx="0.1" cy="51.9" r="8.8" fill="#d0bc58" opacity="0.7"/><circle cx="63.3" cy="53.1" r="4.3" fill="#6c7a30" opacity="0.7"/><circle cx="207.1" cy="36.1" r="6.5" fill="#c4b04a" opacity="0.7"/><circle cx="205.8" cy="12.8" r="4.5" fill="#d0bc58" opacity="0.7"/><circle cx="68.4" cy="17.8" r="3.4" fill="#c4b04a" opacity="0.7"/><circle cx="43.4" cy="38.2" r="3.1" fill="#8a9438" opacity="0.7"/><circle cx="77.3" cy="27.2" r="8.8" fill="#6c7a30" opacity="0.7"/><circle cx="173.1" cy="8.1" r="5.3" fill="#9a8a3a" opacity="0.7"/><circle cx="32.1" cy="54.5" r="7.9" fill="#a8a040" opacity="0.7"/><circle cx="150.9" cy="9.5" r="6.8" fill="#d0bc58" opacity="0.7"/><circle cx="40.9" cy="57.0" r="8.3" fill="#d0bc58" opacity="0.7"/><circle cx="16.3" cy="2.8" r="3.7" fill="#d0bc58" opacity="0.7"/><circle cx="200.2" cy="14.3" r="7.2" fill="#8a9438" opacity="0.7"/><circle cx="87.5" cy="54.3" r="5.9" fill="#d0bc58" opacity="0.7"/><circle cx="36.5" cy="43.2" r="3.4" fill="#a8a040" opacity="0.7"/><circle cx="99.7" cy="39.2" r="6.7" fill="#c4b04a" opacity="0.7"/><circle cx="58.3" cy="55.0" r="4.2" fill="#c4b04a" opacity="0.7"/><circle cx="14.4" cy="24.7" r="4.5" fill="#c4b04a" opacity="0.7"/><circle cx="36.7" cy="22.1" r="6.4" fill="#a8a040" opacity="0.7"/><circle cx="19.2" cy="8.3" r="5.7" fill="#8a9438" opacity="0.7"/><circle cx="136.6" cy="41.5" r="6.5" fill="#a8a040" opacity="0.7"/><circle cx="122.7" cy="55.4" r="5.8" fill="#8a9438" opacity="0.7"/><circle cx="145.8" cy="57.8" r="3.1" fill="#9a8a3a" opacity="0.7"/><circle cx="15.6" cy="4.0" r="4.9" fill="#a8a040" opacity="0.7"/><circle cx="207.9" cy="4.5" r="6.3" fill="#9a8a3a" opacity="0.7"/><circle cx="9.2" cy="56.2" r="7.4" fill="#a8a040" opacity="0.7"/><circle cx="165.0" cy="54.9" r="5.1" fill="#9a8a3a" opacity="0.7"/><circle cx="98.4" cy="4.7" r="8.1" fill="#c4b04a" opacity="0.7"/><circle cx="179.6" cy="34.4" r="6.7" fill="#6c7a30" opacity="0.7"/><circle cx="78.9" cy="0.7" r="3.4" fill="#c4b04a" opacity="0.7"/><circle cx="133.0" cy="59.6" r="8.3" fill="#9a8a3a" opacity="0.7"/><circle cx="68.7" cy="56.1" r="7.2" fill="#6c7a30" opacity="0.7"/><circle cx="91.6" cy="50.3" r="3.5" fill="#d0bc58" opacity="0.7"/><circle cx="6.2" cy="36.1" r="5.9" fill="#a8a040" opacity="0.7"/><circle cx="199.1" cy="6.8" r="7.7" fill="#9a8a3a" opacity="0.7"/><circle cx="191.5" cy="15.3" r="3.1" fill="#8a9438" opacity="0.7"/><circle cx="29.8" cy="36.7" r="6.1" fill="#8a9438" opacity="0.7"/><circle cx="137.3" cy="26.5" r="8.4" fill="#8a9438" opacity="0.7"/><circle cx="84.2" cy="15.0" r="6.8" fill="#a8a040" opacity="0.7"/><circle cx="183.1" cy="23.1" r="6.5" fill="#8a9438" opacity="0.7"/><circle cx="43.7" cy="8.1" r="5.1" fill="#c4b04a" opacity="0.7"/><circle cx="147.9" cy="57.0" r="4.7" fill="#a8a040" opacity="0.7"/><circle cx="23.5" cy="28.3" r="8.6" fill="#6c7a30" opacity="0.7"/><circle cx="79.6" cy="31.2" r="7.0" fill="#9a8a3a" opacity="0.7"/><circle cx="174.5" cy="58.9" r="5.7" fill="#c4b04a" opacity="0.7"/><circle cx="172.4" cy="16.7" r="6.6" fill="#9a8a3a" opacity="0.7"/><circle cx="147.4" cy="34.2" r="4.9" fill="#d0bc58" opacity="0.7"/><circle cx="4.0" cy="8.2" r="5.7" fill="#c4b04a" opacity="0.7"/>
<ellipse cx="6" cy="14" rx="9" ry="24" fill="#eeede4"/>
<ellipse cx="88" cy="10" rx="20" ry="27" fill="#f0eee4"/>
<ellipse cx="134" cy="4" rx="10" ry="12" fill="#ebe8dc"/>
<ellipse cx="55" cy="68" rx="62" ry="12" fill="#3c4a24"/>
<ellipse cx="160" cy="68" rx="55" ry="13" fill="#3a3c26"/>
<ellipse cx="30" cy="66" rx="22" ry="9" fill="#5e3424"/>
<ellipse cx="165" cy="20" rx="8" ry="30" fill="#4a4028" opacity="0.6"/>
</g>
<rect y="86" width="208" height="56" fill="url(#wa2)"/>
<g filter="url(#bl2b)">
<rect x="151.5" y="104.8" width="33.4" height="1.3" fill="#dce8f4" opacity="0.7"/><rect x="196.6" y="97.5" width="13.3" height="1.3" fill="#7e98b4" opacity="0.7"/><rect x="191.3" y="124.9" width="16.0" height="1.3" fill="#90a8c4" opacity="0.7"/><rect x="43.8" y="126.3" width="32.7" height="1.3" fill="#dce8f4" opacity="0.7"/><rect x="27.6" y="105.1" width="20.4" height="1.3" fill="#e8f0f8" opacity="0.7"/><rect x="72.6" y="130.0" width="37.2" height="1.3" fill="#dce8f4" opacity="0.7"/><rect x="76.2" y="134.8" width="21.6" height="1.3" fill="#90a8c4" opacity="0.7"/><rect x="85.2" y="122.0" width="37.3" height="1.3" fill="#90a8c4" opacity="0.7"/><rect x="105.5" y="123.3" width="25.1" height="1.3" fill="#7e98b4" opacity="0.7"/><rect x="87.4" y="123.3" width="16.1" height="1.3" fill="#dce8f4" opacity="0.7"/><rect x="34.8" y="135.2" width="39.4" height="1.3" fill="#7e98b4" opacity="0.7"/><rect x="102.8" y="130.0" width="19.6" height="1.3" fill="#dce8f4" opacity="0.7"/><rect x="63.2" y="96.0" width="23.2" height="1.3" fill="#90a8c4" opacity="0.7"/><rect x="151.3" y="115.4" width="10.9" height="1.3" fill="#dce8f4" opacity="0.7"/><rect x="80.1" y="93.7" width="26.0" height="1.3" fill="#e8f0f8" opacity="0.7"/><rect x="88.8" y="140.0" width="37.0" height="1.3" fill="#90a8c4" opacity="0.7"/><rect x="188.6" y="115.6" width="38.5" height="1.3" fill="#dce8f4" opacity="0.7"/><rect x="149.1" y="113.1" width="26.8" height="1.3" fill="#e8f0f8" opacity="0.7"/><rect x="99.8" y="132.5" width="26.8" height="1.3" fill="#7e98b4" opacity="0.7"/><rect x="131.0" y="137.8" width="36.1" height="1.3" fill="#e8f0f8" opacity="0.7"/><rect x="53.9" y="98.8" width="26.3" height="1.3" fill="#7e98b4" opacity="0.7"/><rect x="110.3" y="101.6" width="26.1" height="1.3" fill="#dce8f4" opacity="0.7"/><rect x="117.1" y="93.3" width="39.1" height="1.3" fill="#90a8c4" opacity="0.7"/><rect x="104.2" y="139.5" width="13.7" height="1.3" fill="#dce8f4" opacity="0.7"/><rect x="135.1" y="95.2" width="26.2" height="1.3" fill="#90a8c4" opacity="0.7"/><rect x="183.4" y="130.4" width="22.1" height="1.3" fill="#e8f0f8" opacity="0.7"/><rect x="89.4" y="98.1" width="23.0" height="1.3" fill="#90a8c4" opacity="0.7"/><rect x="100.2" y="97.2" width="22.6" height="1.3" fill="#dce8f4" opacity="0.7"/><rect x="184.3" y="98.2" width="33.4" height="1.3" fill="#dce8f4" opacity="0.7"/><rect x="-2.5" y="99.5" width="10.4" height="1.3" fill="#7e98b4" opacity="0.7"/><rect x="57.6" y="109.1" width="28.6" height="1.3" fill="#dce8f4" opacity="0.7"/><rect x="94.9" y="119.9" width="35.6" height="1.3" fill="#7e98b4" opacity="0.7"/><rect x="140.7" y="125.7" width="36.4" height="1.3" fill="#dce8f4" opacity="0.7"/><rect x="68.9" y="111.8" width="25.9" height="1.3" fill="#e8f0f8" opacity="0.7"/><rect x="103.0" y="133.5" width="26.0" height="1.3" fill="#e8f0f8" opacity="0.7"/><rect x="101.2" y="132.9" width="28.4" height="1.3" fill="#e8f0f8" opacity="0.7"/><rect x="38.9" y="127.6" width="34.3" height="1.3" fill="#e8f0f8" opacity="0.7"/><rect x="56.3" y="107.1" width="37.7" height="1.3" fill="#e8f0f8" opacity="0.7"/><rect x="153.4" y="101.3" width="12.9" height="1.3" fill="#e8f0f8" opacity="0.7"/><rect x="17.8" y="96.2" width="21.6" height="1.3" fill="#90a8c4" opacity="0.7"/>
<path d="M140 80L208 77L208 92L150 92L130 88z" fill="#3e4046" opacity="0.85"/>
<path d="M0 86L25 87L28 93L0 95z" fill="#5a5048"/>
</g>
<rect x="92" y="82" width="12" height="24" fill="#4e4a3c"/>
<path d="M84 76L98 71L112 80L106 85L96 79L88 81z" fill="#8c3a2e"/>
<circle cx="98" cy="73" r="2.5" fill="#d8c8b0"/>
<path d="M100 70Q150 50 195 68" fill="none" stroke="#a4b060" stroke-width="0.9"/></svg>
<svg class="ph" style="left:573.4px;top:215.7px" width="200.6" height="141.3" viewBox="0 0 200 141" preserveAspectRatio="none"><defs>
<linearGradient id="wa3" x1="0" y1="0" x2="0" y2="1"><stop offset="0" stop-color="#aab4b8"/><stop offset="0.3" stop-color="#bcc6c8"/><stop offset="0.5" stop-color="#a4b0b4"/><stop offset="0.7" stop-color="#c8d0d0"/></linearGradient>
<filter id="bl3"><feGaussianBlur stdDeviation="1.5"/></filter>
</defs>
<rect width="200" height="141" fill="url(#wa3)"/>
<g filter="url(#bl3)">
<g opacity="0.6" stroke="#7e8a8e" stroke-width="2"><path d="M0 37Q50 33 100 39T200 37M0 52Q60 48 120 54T200 50M100 66h100"/></g>
<g opacity="0.8" stroke="#dde4e4" stroke-width="2.5"><path d="M0 28Q60 24 140 30M0 60Q80 56 200 62M30 70h150"/></g>
<path d="M0 72L30 70L50 80L100 80L140 78L200 76L200 141L0 141z" fill="#4e6c40"/>
<ellipse cx="170" cy="98" rx="30" ry="12" fill="#3e5c34"/>
<ellipse cx="95" cy="100" rx="40" ry="9" fill="#5c7c4a"/>
<ellipse cx="60" cy="88" rx="25" ry="6" fill="#3e5a34"/>
<ellipse cx="150" cy="84" rx="25" ry="5" fill="#6a8a56"/>
<ellipse cx="20" cy="104" rx="26" ry="34" fill="#6a604a"/>
<ellipse cx="22" cy="76" rx="20" ry="6" fill="#6e6650"/>
<path d="M0 120Q50 114 100 122T200 120L200 141L0 141z" fill="#76694f"/>
<ellipse cx="80" cy="132" rx="30" ry="7" fill="#858580"/>
</g>
<path d="M74 35L88 32L92 34L96 40L100 70L106 78L128 88L140 102L132 104L114 98L100 86L94 72L90 40z" fill="#686c74"/>
<path d="M108 84L136 100L130 102L112 94z" fill="#565a66"/>
<path d="M114 98L116 114M124 100L126 118" stroke="#6a6050" stroke-width="1"/></svg>
<svg class="ph" style="left:779.7px;top:215.3px" width="217.3" height="141.2" viewBox="0 0 217 141" preserveAspectRatio="none"><rect width="217" height="141" fill="#efece4"/>
<path d="M0 0L40 0L35 8L32 25L33 52L45 75L58 93L66 115L71 141L0 141z" fill="#a9c3e6"/>
<path d="M40 0L44.6 0L77 8L109 21L143 19.4L147 0L174 0L170 19.4L157 32.6L109 30.8L71 17.5L35 8z" fill="#a9c3e6"/>
<path d="M60 34L156 44L154 80L132 112L80 112L60 80z" fill="#d7e2c4"/>
<path d="M62 82L100 84L104 112L80 112z" fill="#e4e6d2"/>
<g fill="none" stroke="#a9c3e6" stroke-linecap="round" stroke-linejoin="round">
<path d="M174 0L180 30L172 52L184 80L178 110L166 134" stroke-width="3.5"/>
<path d="M190 20L196 50L188 75L194 100L182 125L176 141" stroke-width="3"/>
<path d="M200 8L206 30L200 55" stroke-width="2.5"/>
<path d="M160 48L168 70L160 95L170 118" stroke-width="2"/>
<path d="M205 70L210 95L204 120" stroke-width="2"/>
</g>
<g fill="none" stroke="#dcb4b4" stroke-width="0.7" opacity="0.8"><path d="M212 0L208 50L214 90L206 141M190 60L217 62M184 100L217 96"/></g>
<g fill="#9a9a9a" opacity="0.45"><rect x="20" y="5" width="6" height="2"/><rect x="185" y="40" width="10" height="2"/><rect x="85" y="60" width="12" height="1.5"/><rect x="110" y="95" width="10" height="1.5"/><rect x="190" y="85" width="12" height="1.5"/></g>
<path d="M1 0V140H217" fill="none" stroke="#6c6678" stroke-width="2"/></svg>
<svg class="ph" style="left:1002.2px;top:215.5px" width="138.5" height="141.5" viewBox="0 0 138.5 141.5" preserveAspectRatio="none"><defs>
<linearGradient id="wa5" x1="0" y1="0" x2="1" y2="1"><stop offset="0" stop-color="#7aa6e0"/><stop offset="0.5" stop-color="#6a98d8"/><stop offset="1" stop-color="#4a7cc8"/></linearGradient>
<filter id="bl5"><feGaussianBlur stdDeviation="1.6"/></filter>
</defs>
<rect width="138.5" height="141.5" fill="url(#wa5)"/>
<g filter="url(#bl5)">
<g fill="#1f50a4"><ellipse cx="76.9" cy="-0.9" rx="33.2" ry="4.9" transform="rotate(-16.9 76.9 -0.9)" opacity="0.70"/><ellipse cx="31.8" cy="50.0" rx="24.2" ry="4.3" transform="rotate(-15.5 31.8 50.0)" opacity="0.59"/><ellipse cx="42.7" cy="28.5" rx="40.3" ry="5.0" transform="rotate(-15.1 42.7 28.5)" opacity="0.70"/><ellipse cx="120.9" cy="106.0" rx="25.7" ry="3.6" transform="rotate(-27.5 120.9 106.0)" opacity="0.52"/><ellipse cx="-5.5" cy="36.9" rx="26.5" ry="4.1" transform="rotate(-20.8 -5.5 36.9)" opacity="0.73"/><ellipse cx="139.9" cy="143.2" rx="43.9" ry="3.1" transform="rotate(-24.4 139.9 143.2)" opacity="0.48"/><ellipse cx="21.5" cy="25.7" rx="35.6" ry="4.7" transform="rotate(-20.3 21.5 25.7)" opacity="0.69"/><ellipse cx="94.5" cy="114.9" rx="22.1" ry="4.0" transform="rotate(-15.5 94.5 114.9)" opacity="0.72"/><ellipse cx="110.0" cy="66.7" rx="24.5" ry="4.4" transform="rotate(-15.2 110.0 66.7)" opacity="0.52"/><ellipse cx="145.5" cy="54.4" rx="30.0" ry="4.8" transform="rotate(-25.3 145.5 54.4)" opacity="0.65"/><ellipse cx="10.3" cy="17.7" rx="42.6" ry="4.4" transform="rotate(-14.8 10.3 17.7)" opacity="0.45"/><ellipse cx="146.8" cy="93.6" rx="28.8" ry="3.6" transform="rotate(-27.8 146.8 93.6)" opacity="0.45"/><ellipse cx="145.3" cy="92.5" rx="33.2" ry="4.8" transform="rotate(-14.1 145.3 92.5)" opacity="0.55"/><ellipse cx="122.2" cy="26.7" rx="26.3" ry="2.9" transform="rotate(-18.6 122.2 26.7)" opacity="0.48"/></g>
<g fill="#e8f0fa"><ellipse cx="41.8" cy="17.6" rx="35.6" ry="2.8" transform="rotate(-22.1 41.8 17.6)" opacity="0.74"/><ellipse cx="-0.7" cy="71.1" rx="19.0" ry="4.0" transform="rotate(-26.5 -0.7 71.1)" opacity="0.57"/><ellipse cx="57.9" cy="119.0" rx="21.3" ry="3.3" transform="rotate(-12.8 57.9 119.0)" opacity="0.77"/><ellipse cx="82.3" cy="54.5" rx="44.4" ry="2.7" transform="rotate(-23.4 82.3 54.5)" opacity="0.85"/><ellipse cx="13.1" cy="12.7" rx="26.3" ry="5.4" transform="rotate(-18.7 13.1 12.7)" opacity="0.61"/><ellipse cx="92.2" cy="50.9" rx="32.8" ry="2.7" transform="rotate(-24.7 92.2 50.9)" opacity="0.57"/><ellipse cx="98.9" cy="59.1" rx="26.5" ry="4.5" transform="rotate(-23.2 98.9 59.1)" opacity="0.71"/><ellipse cx="117.1" cy="99.8" rx="24.6" ry="4.5" transform="rotate(-14.0 117.1 99.8)" opacity="0.73"/><ellipse cx="106.7" cy="38.2" rx="44.5" ry="2.9" transform="rotate(-15.9 106.7 38.2)" opacity="0.70"/><ellipse cx="14.3" cy="68.3" rx="19.1" ry="4.8" transform="rotate(-18.8 14.3 68.3)" opacity="0.82"/><ellipse cx="130.1" cy="42.1" rx="36.8" ry="4.6" transform="rotate(-20.7 130.1 42.1)" opacity="0.75"/><ellipse cx="124.4" cy="136.7" rx="30.8" ry="4.8" transform="rotate(-16.8 124.4 136.7)" opacity="0.57"/><ellipse cx="93.5" cy="144.0" rx="40.2" ry="3.5" transform="rotate(-17.3 93.5 144.0)" opacity="0.69"/><ellipse cx="-6.4" cy="64.3" rx="22.5" ry="2.9" transform="rotate(-15.7 -6.4 64.3)" opacity="0.57"/><ellipse cx="10.7" cy="32.1" rx="28.6" ry="5.5" transform="rotate(-20.8 10.7 32.1)" opacity="0.58"/><ellipse cx="77.9" cy="127.5" rx="40.1" ry="5.5" transform="rotate(-21.4 77.9 127.5)" opacity="0.65"/><ellipse cx="47.4" cy="127.6" rx="43.9" ry="3.0" transform="rotate(-24.3 47.4 127.6)" opacity="0.61"/><ellipse cx="27.3" cy="67.7" rx="33.9" ry="3.4" transform="rotate(-21.3 27.3 67.7)" opacity="0.55"/><ellipse cx="49.1" cy="80.0" rx="43.7" ry="4.9" transform="rotate(-18.1 49.1 80.0)" opacity="0.73"/><ellipse cx="98.2" cy="3.1" rx="42.3" ry="5.2" transform="rotate(-15.2 98.2 3.1)" opacity="0.86"/><ellipse cx="52.8" cy="54.8" rx="20.8" ry="4.7" transform="rotate(-26.9 52.8 54.8)" opacity="0.57"/><ellipse cx="23.4" cy="19.3" rx="27.2" ry="2.7" transform="rotate(-25.6 23.4 19.3)" opacity="0.55"/><ellipse cx="6.2" cy="49.5" rx="18.7" ry="5.6" transform="rotate(-25.6 6.2 49.5)" opacity="0.76"/><ellipse cx="30.4" cy="47.1" rx="27.8" ry="2.9" transform="rotate(-12.1 30.4 47.1)" opacity="0.85"/><ellipse cx="64.6" cy="67.6" rx="20.3" ry="2.9" transform="rotate(-23.8 64.6 67.6)" opacity="0.67"/><ellipse cx="122.6" cy="19.2" rx="18.6" ry="5.8" transform="rotate(-25.7 122.6 19.2)" opacity="0.73"/></g>
<ellipse cx="131" cy="86" rx="9" ry="9" fill="#5a6a80"/>
<path d="M26 104Q40 96 58 104L58 122L28 122z" fill="#8a96a4"/>
<path d="M52 124Q72 116 98 124L96 141L50 141z" fill="#8490a0"/>
</g>
<path d="M32 80L48 76L58 80L72 86L75 104L74 120L66 120L62 104L52 106L50 120L36 120L34 100z" fill="#74664e"/>
<path d="M36 68L50 70L56 86L48 90L36 88z" fill="#8a9068"/>
<path d="M25 74L38 68L46 72L50 88L40 90L27 86z" fill="#c8302a"/>
<path d="M48 74L58 72L62 82L54 84z" fill="#c0594a"/>
<rect x="37" y="58" width="11" height="10" rx="3" fill="#c4503e"/>
<ellipse cx="41.5" cy="57.5" rx="11" ry="3.2" fill="#4a4440"/>
<rect x="35.5" y="50" width="12" height="7" rx="2.5" fill="#4a4440"/>
<path d="M21 93L109 37" stroke="#505050" stroke-width="0.8"/></svg>
<svg class="ph" style="left:1146.8px;top:215.5px" width="71.7" height="141.5" viewBox="0 0 72 141.5" preserveAspectRatio="none"><defs><filter id="bl6"><feGaussianBlur stdDeviation="1.6"/></filter></defs>
<rect width="72" height="141.5" fill="#64705a"/>
<g filter="url(#bl6)">
<rect x="-5" y="-5" width="45" height="40" fill="#e2e6e2"/>
<rect x="-5" y="12" width="28" height="33" fill="#34502e"/>
<rect x="36" y="-5" width="40" height="72" fill="#4a6e38"/>
<rect x="-5" y="42" width="45" height="55" fill="#aeaca4"/>
<rect x="38" y="64" width="38" height="24" fill="#9a9a90"/>
<rect x="-5" y="88" width="82" height="60" fill="#5e6a54"/>
<rect x="8" y="86" width="26" height="56" fill="#7e8a7c"/>
</g></svg>
<div class="a" style="left:1261.5px;top:189.4px;width:18.5px;height:24px;background:#e8e8e8"></div>
<div class="a" style="left:1261.5px;top:207px;width:18.5px;height:581px;background:#dadada"></div>
<div class="a" style="left:1261.5px;top:189.3px;width:1.5px;height:580px;background:#cdcdcd"></div>
<div class="a" style="left:1264.6px;top:193.7px;width:13.8px;height:13.3px;background:#fbfbfb"></div>
<div class="a" style="left:1265px;top:208.4px;width:13px;height:518px;background:#f6f6f6;border:1px solid #cdcdcd"></div>
<div class="a" style="left:1264.4px;top:756.5px;width:13.5px;height:12.2px;background:#fbfbfb"></div>
<svg style="left:1264px;top:193px" width="16" height="580" viewBox="1264 193 16 580"><path d="M1268.5 202.5l3-3.2l3 3.2z" fill="#505050"/><path d="M1268.3 760.5h6.2l-3.1 3.5z" fill="#505050"/></svg>
<div class="a" style="left:0;top:768.7px;width:1280px;height:19.3px;background:#e6e6e6"></div>
<div class="a" style="left:0;top:786.6px;width:1280px;height:1.6px;background:#d2d2d2"></div>
<div class="a" style="left:606px;top:769px;width:158px;height:17.6px;background:#e9e9e9"></div>
<svg style="left:0;top:768px" width="70" height="20" viewBox="0 768 70 20"><path d="M21 776.5l-2.5 2.5l2.5 2.5M37.5 776.5l2.5 2.5l-2.5 2.5" fill="none" stroke="#b8b8b8" stroke-width="1"/></svg>
<div class="a" style="left:70.6px;top:771.2px;width:183.2px;height:15.7px;background:#8fbd58"></div>
<div class="a" style="left:256.9px;top:771.2px;width:153.7px;height:15.7px;background:#8fbd58"></div>
<div class="a" style="left:414px;top:769.5px;width:190.5px;height:17.5px;background:#e6f0dc;border-bottom:2px solid #5b8f5f"></div>
<span class="t" style="left:84.06px;top:773.00px;font-size:11.85px;color:#2a4018;transform:scaleX(0.9928);-webkit-text-stroke:0.3px #2a4018;">Mt. Rainier National Park-hike</span>

<span class="t" style="left:268.70px;top:773.00px;font-size:11.85px;color:#2a4018;transform:scaleX(0.9468);-webkit-text-stroke:0.3px #2a4018;">San Juan Islands - sailing</span>

<span class="t" style="left:420.02px;top:772.00px;font-size:11.85px;color:#2e7048;font-weight:bold;transform:scaleX(1.0196);">Olympic National Park - fishing</span>

<svg style="left:628px;top:772px" width="14" height="14" viewBox="0 0 14 14"><circle cx="7" cy="7.5" r="5.6" fill="none" stroke="#9a9a9a" stroke-width="1"/><path d="M4.3 7.5h5.4M7 4.8v5.4" stroke="#8a8a8a" stroke-width="1.2"/></svg>
<svg style="left:760px;top:770px" width="10" height="18" viewBox="760 770 10 18"><g fill="#b0b0b0"><rect x="765.4" y="774" width="1.3" height="1.3"/><rect x="765.4" y="778" width="1.3" height="1.3"/><rect x="765.4" y="782" width="1.3" height="1.3"/></g></svg>
<div class="a" style="left:777.5px;top:770.5px;width:484px;height:15.5px;background:#d9d9d9"></div>
<div class="a" style="left:777.5px;top:770.5px;width:13.5px;height:15.5px;background:#fbfbfb"></div>
<div class="a" style="left:791px;top:770.5px;width:355px;height:15.5px;background:#ffffff;border:1px solid #cfcfcf"></div>
<div class="a" style="left:1249.4px;top:770.5px;width:12.1px;height:15.5px;background:#fbfbfb"></div>
<svg style="left:777px;top:770px" width="490" height="18" viewBox="777 770 490 18"><path d="M785.8 775.2v6.4l-3.5-3.2z" fill="#505050"/><path d="M1253.6 775.2v6.4l3.5-3.2z" fill="#505050"/></svg>
<div class="a" style="left:0;top:788.2px;width:1280px;height:28.8px;background:#f0f0f0"></div>
<span class="t" style="left:6.77px;top:799.00px;font-size:9.1px;color:#555;transform:scaleX(1.0064);">Bereit</span>

<div class="a" style="left:1020px;top:790px;width:31px;height:27px;background:#d5d5d5"></div>
<svg style="left:1020px;top:790px" width="260" height="27" viewBox="1020 790 260 27">
 <g fill="none" stroke="#7a7a7a" stroke-width="1"><rect x="1028.5" y="795.5" width="15" height="15"/><path d="M1028.5 800.5h15M1028.5 805.5h15M1033.5 795.5v15M1038.5 795.5v15"/></g>
 <g fill="none" stroke="#888" stroke-width="1"><rect x="1060.5" y="796.5" width="16.5" height="15.5"/><rect x="1064.5" y="798.5" width="8.5" height="11.5"/></g><path d="M1068.8 801v6" stroke="#888" stroke-width="1.2"/>
 <g fill="none" stroke="#7a7a7a" stroke-width="1.1"><rect x="1094.5" y="796.5" width="15.5" height="15.5"/><path d="M1094.5 805.5h15.5M1102.2 796.5v9"/></g>
 <path d="M1122 803.2h7.5" stroke="#666" stroke-width="1.6"/>
 <path d="M1132 803.2h88" stroke="#c4c4c4" stroke-width="1"/>
 <rect x="1180" y="798" width="3.8" height="9.5" fill="#555"/>
 <path d="M1223.6 803.2h8.6M1227.9 798.8v8.6" stroke="#555" stroke-width="1.8"/>
</svg>
<span class="t" style="left:1244.80px;top:799.00px;font-size:9.7px;color:#555;transform:scaleX(0.9552);">140 %</span>

</body></html>
